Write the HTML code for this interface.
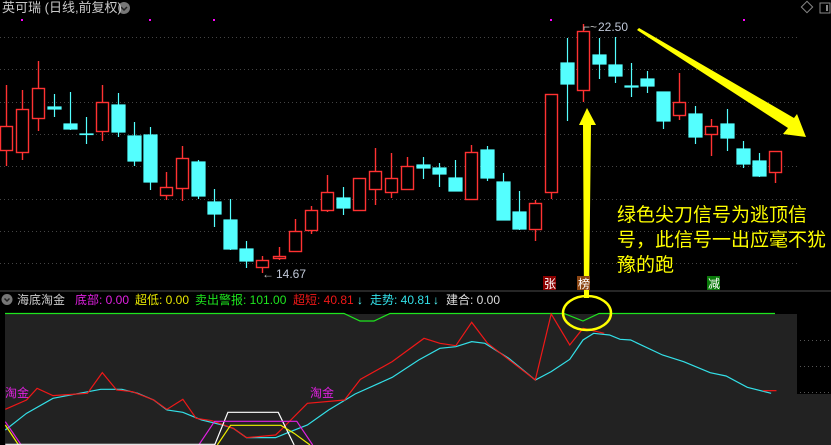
<!DOCTYPE html>
<html><head><meta charset="utf-8"><style>
body{margin:0;width:831px;height:445px;background:#000;overflow:hidden;position:relative;font-family:"Liberation Sans","Noto Sans CJK SC",sans-serif}
.t{position:absolute;white-space:nowrap}
.h{position:absolute;top:292px;font-size:12px;line-height:16px;white-space:nowrap}
</style></head><body>
<svg width="831" height="445" style="position:absolute;left:0;top:0">
<g stroke="#444" stroke-dasharray="1,3" stroke-width="1">
<line x1="0" y1="37.5" x2="800" y2="37.5"/><line x1="0" y1="69.5" x2="800" y2="69.5"/><line x1="0" y1="102.5" x2="800" y2="102.5"/><line x1="0" y1="134.5" x2="800" y2="134.5"/><line x1="0" y1="166.5" x2="800" y2="166.5"/><line x1="0" y1="199.5" x2="800" y2="199.5"/><line x1="0" y1="231.5" x2="800" y2="231.5"/><line x1="0" y1="263.5" x2="800" y2="263.5"/>
</g>
<g fill="#f0f">
<rect x="21" y="19" width="2" height="2"/><rect x="149" y="19" width="2" height="2"/><rect x="213" y="19" width="2" height="2"/><rect x="550" y="19" width="2" height="2"/><rect x="743" y="19" width="2" height="2"/>
</g>
<g stroke="#ff3232" stroke-width="1.4" fill="none">
<line x1="6.5" y1="85" x2="6.5" y2="166"/><rect x="0.5" y="126.5" width="12" height="24" fill="#000"/>
<line x1="22.5" y1="90" x2="22.5" y2="160"/><rect x="16.5" y="109.5" width="12" height="43" fill="#000"/>
<line x1="38.5" y1="61" x2="38.5" y2="131"/><rect x="32.5" y="88.5" width="12" height="30" fill="#000"/>
<line x1="102.5" y1="85" x2="102.5" y2="141"/><rect x="96.5" y="102.5" width="12" height="29" fill="#000"/>
<line x1="166.5" y1="172" x2="166.5" y2="200"/><rect x="160.5" y="187.5" width="12" height="8" fill="#000"/>
<line x1="182.5" y1="146" x2="182.5" y2="201"/><rect x="176.5" y="158.5" width="12" height="30" fill="#000"/>
<line x1="262.5" y1="256" x2="262.5" y2="273"/><rect x="256.5" y="260.5" width="12" height="7" fill="#000"/>
<line x1="279.5" y1="247" x2="279.5" y2="260"/><rect x="273.5" y="256.5" width="12" height="2" fill="#000"/>
<line x1="295.5" y1="219" x2="295.5" y2="251"/><rect x="289.5" y="231.5" width="12" height="20" fill="#000"/>
<line x1="311.5" y1="206" x2="311.5" y2="234"/><rect x="305.5" y="210.5" width="12" height="20" fill="#000"/>
<line x1="327.5" y1="175" x2="327.5" y2="212"/><rect x="321.5" y="192.5" width="12" height="18" fill="#000"/>
<rect x="353.5" y="178.5" width="12" height="32" fill="#000"/>
<line x1="375.5" y1="148" x2="375.5" y2="205"/><rect x="369.5" y="171.5" width="12" height="18" fill="#000"/>
<line x1="391.5" y1="153" x2="391.5" y2="198"/><rect x="385.5" y="178.5" width="12" height="14" fill="#000"/>
<line x1="407.5" y1="157" x2="407.5" y2="189"/><rect x="401.5" y="166.5" width="12" height="23" fill="#000"/>
<line x1="471.5" y1="145" x2="471.5" y2="199"/><rect x="465.5" y="152.5" width="12" height="47" fill="#000"/>
<line x1="535.5" y1="200" x2="535.5" y2="241"/><rect x="529.5" y="203.5" width="12" height="26" fill="#000"/>
<line x1="551.5" y1="94" x2="551.5" y2="199"/><rect x="545.5" y="94.5" width="12" height="98" fill="#000"/>
<line x1="583.5" y1="24" x2="583.5" y2="102"/><rect x="577.5" y="31.5" width="12" height="59" fill="#000"/>
<line x1="679.5" y1="73" x2="679.5" y2="120"/><rect x="673.5" y="102.5" width="12" height="13" fill="#000"/>
<line x1="711.5" y1="119" x2="711.5" y2="156"/><rect x="705.5" y="126.5" width="12" height="8" fill="#000"/>
<line x1="775.5" y1="151" x2="775.5" y2="183"/><rect x="769.5" y="151.5" width="12" height="21" fill="#000"/>
</g>
<g stroke="#54ffff" stroke-width="1.2" fill="#54ffff">
<line x1="54.5" y1="94" x2="54.5" y2="117"/><rect x="48" y="107" width="13" height="2"/>
<line x1="70.5" y1="92" x2="70.5" y2="130"/><rect x="64" y="124" width="13" height="5"/>
<line x1="86.5" y1="117" x2="86.5" y2="144"/><rect x="80" y="134" width="13" height="0.5"/>
<line x1="118.5" y1="93" x2="118.5" y2="137"/><rect x="112" y="105" width="13" height="27"/>
<line x1="134.5" y1="122" x2="134.5" y2="166"/><rect x="128" y="136" width="13" height="25"/>
<line x1="150.5" y1="127" x2="150.5" y2="190"/><rect x="144" y="135" width="13" height="47"/>
<line x1="198.5" y1="160" x2="198.5" y2="199"/><rect x="192" y="162" width="13" height="34"/>
<line x1="214.5" y1="189" x2="214.5" y2="227"/><rect x="208" y="202" width="13" height="12"/>
<line x1="230.5" y1="199" x2="230.5" y2="250"/><rect x="224" y="220" width="13" height="29"/>
<line x1="246.5" y1="241" x2="246.5" y2="268"/><rect x="240" y="249" width="13" height="12"/>
<line x1="343.5" y1="187" x2="343.5" y2="215"/><rect x="337" y="198" width="13" height="10"/>
<line x1="423.5" y1="157" x2="423.5" y2="179"/><rect x="417" y="165" width="13" height="3"/>
<line x1="439.5" y1="163" x2="439.5" y2="187"/><rect x="433" y="168" width="13" height="6"/>
<line x1="455.5" y1="160" x2="455.5" y2="191"/><rect x="449" y="178" width="13" height="13"/>
<line x1="487.5" y1="146" x2="487.5" y2="181"/><rect x="481" y="150" width="13" height="28"/>
<line x1="503.5" y1="173" x2="503.5" y2="220"/><rect x="497" y="182" width="13" height="38"/>
<line x1="519.5" y1="191" x2="519.5" y2="230"/><rect x="513" y="212" width="13" height="17"/>
<line x1="567.5" y1="38" x2="567.5" y2="121"/><rect x="561" y="63" width="13" height="21"/>
<line x1="599.5" y1="38" x2="599.5" y2="79"/><rect x="593" y="55" width="13" height="9"/>
<line x1="615.5" y1="37" x2="615.5" y2="83"/><rect x="609" y="65" width="13" height="11"/>
<line x1="631.5" y1="63" x2="631.5" y2="97"/><rect x="625" y="86" width="13" height="1"/>
<line x1="647.5" y1="71" x2="647.5" y2="93"/><rect x="641" y="79" width="13" height="7"/>
<line x1="663.5" y1="92" x2="663.5" y2="129"/><rect x="657" y="92" width="13" height="29"/>
<line x1="695.5" y1="106" x2="695.5" y2="144"/><rect x="689" y="114" width="13" height="23"/>
<line x1="727.5" y1="109" x2="727.5" y2="151"/><rect x="721" y="124" width="13" height="14"/>
<line x1="743.5" y1="141" x2="743.5" y2="168"/><rect x="737" y="149" width="13" height="15"/>
<line x1="759.5" y1="153" x2="759.5" y2="177"/><rect x="753" y="161" width="13" height="15"/>
</g>
<text x="583" y="31" fill="#bbb" font-size="12" font-family="Liberation Sans">⌐~</text>
<text x="598" y="31" fill="#c0c8d8" font-size="12" font-family="Liberation Sans">22.50</text>
<text x="262" y="278" fill="#bbb" font-size="12" font-family="Liberation Sans">←</text>
<text x="276" y="278" fill="#c0c8d8" font-size="12" font-family="Liberation Sans">14.67</text>
<line x1="0" y1="291" x2="831" y2="291" stroke="#333" stroke-width="1.5"/>
<rect x="5" y="314" width="826" height="131" fill="#222"/>
<rect x="797" y="314" width="34" height="80" fill="#000"/>
<g stroke="#555" stroke-dasharray="1,3"><line x1="800" y1="340.5" x2="831" y2="340.5"/><line x1="800" y1="366.5" x2="831" y2="366.5"/><line x1="800" y1="392.5" x2="831" y2="392.5"/></g>
<polyline fill="none" stroke="#1ee61e" stroke-width="1.2" points="5,313.5 344,313.5 360,321 374,321 390,313.5 564,313.5 583,321 599,313.5 775,313.5"/>
<g transform="translate(0,300) scale(0.53,0.3333)" fill="none">
<polyline vector-effect="non-scaling-stroke" stroke="#33e0e8" stroke-width="1.2" points="10,390 50,340 100,295 150,280 190,268 230,268 260,280 290,300 315,330 345,337 380,360 420,375 440,385 465,413 520,413 540,400 580,375 620,330 670,282 740,232 790,180 830,145 860,140 890,125 915,130 960,175 1010,240 1040,215 1075,178 1100,120 1120,100 1150,105 1170,118 1190,120 1250,165 1290,185 1340,218 1370,228 1410,262 1455,280"/>
<polyline vector-effect="non-scaling-stroke" stroke="#f01818" stroke-width="1.2" points="10,328 50,300 70,265 100,287 165,280 193,218 220,270 250,275 290,300 315,328 345,298 370,355 400,362 440,385 465,413 520,405 530,390 580,310 650,300 680,238 740,185 800,115 830,130 860,137 890,67 920,130 1010,240 1040,42 1075,135 1100,85 1140,100"/>
<polyline vector-effect="non-scaling-stroke" stroke="#f01818" stroke-width="1.2" points="1440,272 1465,272"/>
<polyline vector-effect="non-scaling-stroke" stroke="#fff" stroke-width="1.2" points="405,435 430,337 525,337 555,435"/>
<polyline vector-effect="non-scaling-stroke" stroke="#e020e0" stroke-width="1.2" points="375,435 405,364 560,364 590,435"/>
<polyline vector-effect="non-scaling-stroke" stroke="#e020e0" stroke-width="1.2" points="10,365 40,435"/>
<polyline vector-effect="non-scaling-stroke" stroke="#f0f000" stroke-width="1.2" points="410,435 435,376 530,376 555,400 585,435"/>
<polyline vector-effect="non-scaling-stroke" stroke="#f0f000" stroke-width="1.2" points="10,375 35,435"/>
<polyline vector-effect="non-scaling-stroke" stroke="#fff" stroke-width="1.2" points="10,433 405,433"/>
</g>
<text x="5" y="397" fill="#e020e0" font-size="12" font-family="Noto Sans CJK SC">淘金</text>
<text x="310" y="397" fill="#e020e0" font-size="12" font-family="Noto Sans CJK SC">淘金</text>
<polygon fill="#ffff00" points="587,108 579,125 583,125 584,298 589,298 591,125 596,125"/>
<polygon fill="#ffff00" points="637,30 639,28 794,118 797,114 806,137 783,134 788,128"/>
<ellipse cx="587" cy="313" rx="24" ry="17" fill="none" stroke="#ffff00" stroke-width="2.5"/>
<rect x="543" y="276" width="13" height="14" fill="#8b0000"/>
<rect x="577" y="276" width="13" height="14" fill="#8b4513"/>
<rect x="707" y="276" width="13" height="14" fill="#0a7a0a"/>
<text x="544" y="288" fill="#fff" font-size="12" font-family="Noto Sans CJK SC">张</text>
<text x="578" y="288" fill="#fff" font-size="12" font-family="Noto Sans CJK SC">榜</text>
<text x="708" y="288" fill="#fff" font-size="12" font-family="Noto Sans CJK SC">减</text>
<rect x="803" y="3" width="8" height="8" fill="none" stroke="#888" transform="rotate(45 807 7)"/>
<rect x="820" y="3" width="10" height="10" fill="none" stroke="#888"/><rect x="826" y="5" width="2" height="6" fill="#888"/>
<circle cx="124" cy="8" r="6" fill="#777"/><polyline points="121,7 124,10 127,7" fill="none" stroke="#222" stroke-width="1.5"/>
<circle cx="7" cy="299.5" r="5.5" fill="#777"/><polyline points="4.5,298.5 7,301 9.5,298.5" fill="none" stroke="#222" stroke-width="1.5"/>
</svg>
<div class="t" style="left:2px;top:0px;font-size:13px;color:#c8c8c8;line-height:16px">英可瑞 (日线,前复权)</div>
<div class="h" style="left:17px;color:#ccc">海底淘金</div>
<div class="h" style="left:75px;color:#e020e0">底部: 0.00</div>
<div class="h" style="left:135px;color:#e8e800">超低: 0.00</div>
<div class="h" style="left:195px;color:#1ee61e">卖出警报: 101.00</div>
<div class="h" style="left:293px;color:#f01818">超短: 40.81</div>
<div class="h" style="left:357px;color:#54ffff">↓</div>
<div class="h" style="left:370px;color:#33e0e8">走势: 40.81</div>
<div class="h" style="left:433px;color:#54ffff">↓</div>
<div class="h" style="left:446px;color:#ddd">建合: 0.00</div>
<div class="t" style="left:617px;top:203px;font-size:19px;line-height:25px;color:#ffff00">绿色尖刀信号为逃顶信<br>号，此信号一出应毫不犹<br>豫的跑</div>
</body></html>
